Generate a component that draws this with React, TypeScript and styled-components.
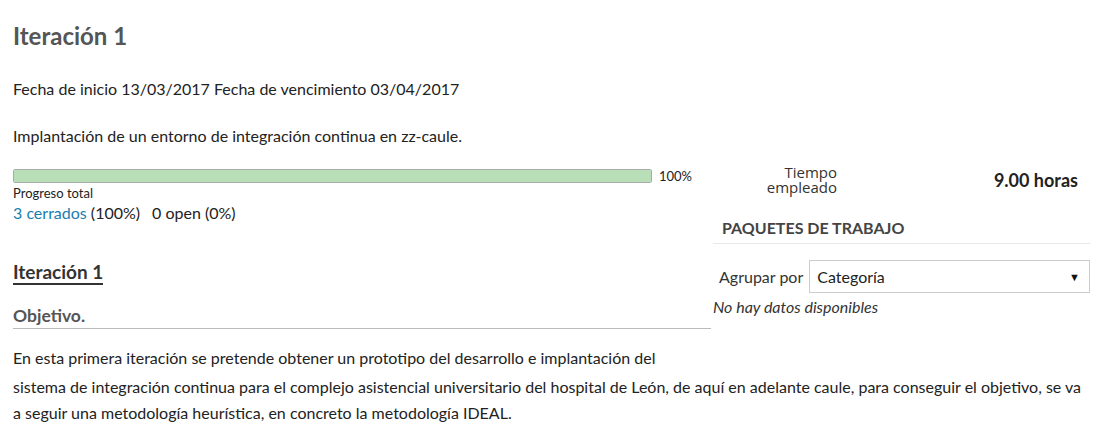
import React from "react";
import styled, { createGlobalStyle } from "styled-components";

const Global = createGlobalStyle`
  html, body { margin: 0; padding: 0; background: #fff; }
  body { font-family: Lato, "Open Sans", sans-serif; color: #333; }
  * { box-sizing: border-box; }
`;

const Page = styled.div`
  padding: 0 17px 0 13px;
  width: 1107px;
`;

const Title = styled.h1`
  margin: 0;
  padding-top: 21px;
  font-size: 24px;
  line-height: 30px;
  font-weight: 700;
  color: #555;
`;

const Line = styled.p<{ $top: number }>`
  margin: ${(p) => p.$top}px 0 0;
  font-size: 16px;
  line-height: 20px;
  color: #222;
`;

const Columns = styled.div`
  display: grid;
  grid-template-columns: 698px 1fr;
  margin-top: 20px;
`;

const Left = styled.div`
  display: flex;
  flex-direction: column;
`;

const BarRow = styled.div`
  display: flex;
  align-items: center;
  gap: 7px;
  height: 20px;
`;

const Bar = styled.div`
  width: 639px;
  height: 14px;
  border: 1px solid #aaa;
  border-radius: 2px;
  background: #fff;
  overflow: hidden;
`;

const Fill = styled.div`
  height: 100%;
  background: #b8dfb8;
`;

const Small = styled.span`
  font-size: 13px;
  line-height: 15px;
  color: #222;
`;

const Stats = styled.div`
  font-size: 16px;
  line-height: 24px;
  color: #222;
  display: flex;
  gap: 12px;
`;

const Link = styled.a`
  color: #1a7eae;
  text-decoration: none;
`;

const SectionHead = styled.h2`
  margin: 36px 0 0;
  align-self: flex-start;
  font-size: 19px;
  line-height: 22px;
  font-weight: 700;
  color: #333;
  border-bottom: 2px solid #333;
`;

const SubHead = styled.h3`
  margin: 20px 0 0;
  font-size: 17.5px;
  line-height: 22px;
  font-weight: 700;
  color: #555;
  padding-bottom: 1px;
  border-bottom: 1px solid #bbb;
`;

const Right = styled.div`
  display: flex;
  flex-direction: column;
`;

const TimeRow = styled.div`
  display: flex;
  align-items: center;
  justify-content: space-between;
  padding-right: 12px;
  margin-top: -1px;
`;

const TimeLabel = styled.div`
  width: 126px;
  text-align: right;
  font-family: "Open Sans", sans-serif;
  font-size: 15px;
  line-height: 15px;
  color: #333;
`;

const TimeValue = styled.div`
  font-size: 18px;
  font-weight: 700;
  color: #222;
`;

const PanelHead = styled.h4`
  margin: 23px 0 0 2px;
  padding: 0 0 5px 9px;
  font-size: 16px;
  line-height: 20px;
  font-weight: 700;
  color: #444;
  border-bottom: 1px solid #e8e8e8;
`;

const GroupRow = styled.div`
  display: flex;
  align-items: center;
  margin-top: 16px;
  padding-left: 8px;
  gap: 6px;
`;

const GroupLabel = styled.span`
  font-size: 16px;
  color: #333;
`;

const Select = styled.div`
  flex: 1;
  height: 33px;
  border: 1px solid #ccc;
  display: flex;
  align-items: center;
  justify-content: space-between;
  padding: 0 9px 0 7px;
  font-size: 16px;
  color: #222;
`;

const Arrow = styled.span`
  font-size: 11px;
  color: #111;
`;

const Empty = styled.p`
  margin: 4px 0 0 2px;
  font-size: 16px;
  line-height: 20px;
  font-style: italic;
  color: #333;
`;

const Para = styled.div`
  margin-top: 16px;
  font-size: 16px;
  line-height: 26px;
  color: #222;
`;

const FirstLine = styled.div`
  margin-bottom: 3px;
`;

export default function App() {
  return (
    <Page>
      <Global />
      <Title>Iteración 1</Title>
      <Line $top={28}>Fecha de inicio 13/03/2017 Fecha de vencimiento 03/04/2017</Line>
      <Line $top={27}>Implantación de un entorno de integración continua en zz-caule.</Line>
      <Columns>
        <Left>
          <BarRow>
            <Bar>
              <Fill style={{ width: "100%" }} />
            </Bar>
            <Small>100%</Small>
          </BarRow>
          <Small>Progreso total</Small>
          <Stats>
            <span>
              <Link href="#">3 cerrados</Link> (100%)
            </span>
            <span>0 open (0%)</span>
          </Stats>
          <SectionHead>Iteración 1</SectionHead>
          <SubHead>Objetivo.</SubHead>
        </Left>
        <Right>
          <TimeRow>
            <TimeLabel>
              Tiempo
              <br />
              empleado
            </TimeLabel>
            <TimeValue>9.00 horas</TimeValue>
          </TimeRow>
          <PanelHead>PAQUETES DE TRABAJO</PanelHead>
          <GroupRow>
            <GroupLabel>Agrupar por</GroupLabel>
            <Select>
              <span>Categoría</span>
              <Arrow>▼</Arrow>
            </Select>
          </GroupRow>
          <Empty>No hay datos disponibles</Empty>
        </Right>
      </Columns>
      <Para>
        <FirstLine>
          En esta primera iteración se pretende obtener un prototipo del desarrollo e implantación del
        </FirstLine>
        sistema de integración continua para el complejo asistencial universitario del hospital de León, de aquí en adelante caule, para conseguir el objetivo, se va a seguir una metodología heurística, en concreto la metodología IDEAL.
      </Para>
    </Page>
  );
}
